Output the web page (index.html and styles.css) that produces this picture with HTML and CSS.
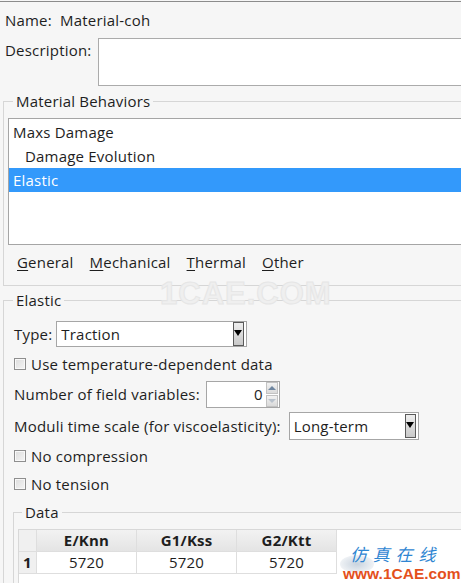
FILE: index.html
```html
<!DOCTYPE html>
<html>
<head>
<meta charset="utf-8">
<link rel="stylesheet" href="styles.css">
</head>
<body>
<div class="page">
  <div class="topline"></div>
  <div class="name-row">Name:&nbsp; Material-coh</div>
  <div class="desc-row">
    <span class="desc-label">Description:</span>
    <div class="desc-box"></div>
  </div>

  <fieldset class="group behaviors">
    <legend>Material Behaviors</legend>
    <div class="list">
      <div class="item">Maxs Damage</div>
      <div class="item sub">Damage Evolution</div>
      <div class="item selected">Elastic</div>
    </div>
    <div class="tabs">
      <span class="tab"><u>G</u>eneral</span>
      <span class="tab"><u>M</u>echanical</span>
      <span class="tab"><u>T</u>hermal</span>
      <span class="tab"><u>O</u>ther</span>
    </div>
  </fieldset>

  <fieldset class="group elastic">
    <legend>Elastic</legend>
    <div class="row r1">
      <span>Type:</span>
      <div class="combo type-combo"><span>Traction</span><i class="drop"></i></div>
    </div>
    <div class="row r2">
      <i class="check"></i><span>Use temperature-dependent data</span>
    </div>
    <div class="row r3">
      <span>Number of field variables:</span>
      <div class="spin"><span>0</span>
        <div class="spin-btns"><i class="up"></i><i class="down"></i></div>
      </div>
    </div>
    <div class="row r4">
      <span>Moduli time scale (for viscoelasticity):</span>
      <div class="combo time-combo"><span>Long-term</span><i class="drop"></i></div>
    </div>
    <div class="row r5">
      <i class="check"></i><span>No compression</span>
    </div>
    <div class="row r6">
      <i class="check"></i><span>No tension</span>
    </div>

    <fieldset class="group data">
      <legend>Data</legend>
      <div class="table">
        <div class="tr head">
          <div class="td rh"></div>
          <div class="td">E/Knn</div>
          <div class="td">G1/Kss</div>
          <div class="td">G2/Ktt</div>
        </div>
        <div class="tr">
          <div class="td rh">1</div>
          <div class="td">5720</div>
          <div class="td">5720</div>
          <div class="td">5720</div>
        </div>
      </div>
    </fieldset>
  </fieldset>

  <div class="wm-center">1CAE.COM</div>
  <div class="wm-logo">
    <i class="swoosh"></i>
    <div class="wm-cn">仿 真 在 线</div>
    <div class="wm-url">www.1CAE.com</div>
  </div>
</div>
</body>
</html>
```

FILE: styles.css
```css
html, body {
  margin: 0;
  padding: 0;
  background: #f6f6f6;
  overflow: hidden;
}
.page {
  position: relative;
  width: 461px;
  height: 583px;
  overflow: hidden;
  font-family: "Open Sans", "Noto Sans", sans-serif;
  font-size: 15px;
  letter-spacing: 0.2px;
  color: #1e1e1e;
}
.topline {
  margin-top: 1px;
  height: 1px;
  background: #8c8c8c;
}
.name-row {
  height: 36px;
  line-height: 36px;
  padding-left: 5px;
}
.desc-row {
  display: flex;
  align-items: flex-start;
  height: 48px;
}
.desc-label {
  width: 93px;
  padding-left: 5px;
  line-height: 24px;
}
.desc-box {
  flex: 1;
  height: 46px;
  margin-right: -10px;
  background: #fff;
  border: 1px solid #ababab;
}

.group {
  margin: 0;
  border: 1px solid #d6d6d6;
  padding: 0;
  min-width: 0;
}
.group legend {
  padding: 0 3px;
  line-height: 20px;
  height: 20px;
}

.behaviors {
  margin: 5px -20px 0 3px;
  padding: 7px 0 10px 4px;
}
.behaviors legend { margin-left: 5px; }
.list {
  height: 124px;
  background: #fff;
  border: 1px solid #a5a5a5;
  padding-top: 1px;
}
.item {
  height: 24px;
  line-height: 24px;
  padding-left: 4px;
}
.item.sub { padding-left: 16px; }
.item.selected {
  background: #3399fb;
  color: #fff;
}
.tabs {
  display: flex;
  gap: 16px;
  height: 26px;
  line-height: 26px;
  margin-top: 4px;
  padding-left: 9px;
}
.tab u { text-decoration-thickness: 1px; text-underline-offset: 2px; }

.elastic {
  margin: 4px -20px 0 3px;
  padding: 9px 0 20px 9px;
  border-bottom: none;
}
.elastic legend { margin-left: 0; }
.row {
  display: flex;
  align-items: center;
  padding-left: 1px;
  gap: 5px;
}
.r1 { height: 30px; gap: 4px; }
.r2 { height: 30px; }
.r3 { height: 30px; gap: 6px; }
.r4 { height: 34px; gap: 8px; }
.r5 { height: 26px; }
.r6 { height: 30px; }

.combo {
  display: flex;
  align-items: center;
  justify-content: space-between;
  background: #fff;
  border: 1px solid #a6a6a6;
  box-sizing: border-box;
  padding: 0 2px 0 4px;
}
.type-combo { width: 191px; height: 26px; }
.time-combo { width: 130px; height: 28px; }
.drop {
  position: relative;
  width: 9px;
  height: 22px;
  border: 1px solid #5a5a5a;
  background: linear-gradient(#eeeeee, #c9c9c9);
}
.drop::after {
  content: "";
  position: absolute;
  left: 0;
  top: 7px;
  border-left: 4.5px solid transparent;
  border-right: 4.5px solid transparent;
  border-top: 6px solid #000;
}

.check {
  width: 10px;
  height: 10px;
  border: 1px solid #8e8e8e;
  background: linear-gradient(135deg, #dcdcdc, #f4f4f4);
  box-shadow: inset 0 0 0 1px #f8f8f8;
}

.spin {
  display: flex;
  align-items: center;
  justify-content: flex-end;
  width: 74px;
  height: 27px;
  box-sizing: border-box;
  background: #fff;
  border: 1px solid #a6a6a6;
  padding-right: 1px;
  gap: 3px;
}
.spin-btns {
  display: flex;
  flex-direction: column;
  gap: 1px;
}
.spin-btns i {
  position: relative;
  width: 10px;
  height: 10px;
  border: 1px solid #c2c2c2;
  background: linear-gradient(#f2f2f2, #dadada);
}
.spin-btns i::after {
  content: "";
  position: absolute;
  left: 1px;
  border-left: 4px solid transparent;
  border-right: 4px solid transparent;
}
.spin-btns .up::after { top: 3px; border-bottom: 4px solid #6f86a0; }
.spin-btns .down::after { top: 3px; border-top: 4px solid #b9c2cc; }

.data {
  margin: 3px 0 0 0;
  padding: 7px 0 0 4px;
  border-bottom: none;
  border-right: none;
}
.data legend { margin-left: 4px; }
.table {
  background: #fff;
  border-top: 1px solid #d8d8d8;
  border-left: 1px solid #d8d8d8;
  height: 60px;
}
.tr {
  display: flex;
  height: 22px;
}
.td {
  width: 99px;
  border-right: 1px solid #dedede;
  border-bottom: 1px solid #dedede;
  text-align: center;
  line-height: 21px;
}
.head .td {
  background: linear-gradient(#f2f2f2, #e4e4e4);
  font-weight: bold;
}
.td.rh {
  width: 17px;
  background: #f0f0f0;
  font-weight: bold;
}

.wm-center {
  position: absolute;
  left: 160px;
  top: 276px;
  font-family: "Liberation Sans", sans-serif;
  font-weight: bold;
  font-size: 31px;
  letter-spacing: 1px;
  color: #efefef;
  -webkit-text-stroke: 1px #e6e6e6;
}
.wm-logo {
  position: absolute;
  left: 336px;
  top: 543px;
  width: 124px;
  height: 39px;
}
.swoosh {
  position: absolute;
  left: 4px;
  top: 12px;
  width: 34px;
  height: 18px;
  border-radius: 50%;
  background: radial-gradient(#c9d3de, rgba(210,220,230,0));
}
.wm-cn {
  position: absolute;
  left: 14px;
  top: 1px;
  font-family: "Noto Sans CJK SC", sans-serif;
  font-size: 17px;
  line-height: 20px;
  height: 20px;
  color: #2f86d2;
  font-style: italic;
  letter-spacing: 1px;
}
.wm-url {
  position: absolute;
  left: 7px;
  top: 23px;
  font-family: "Liberation Sans", sans-serif;
  font-weight: bold;
  font-size: 15.5px;
  line-height: 15px;
  letter-spacing: 0;
  color: #e4501c;
}
```
